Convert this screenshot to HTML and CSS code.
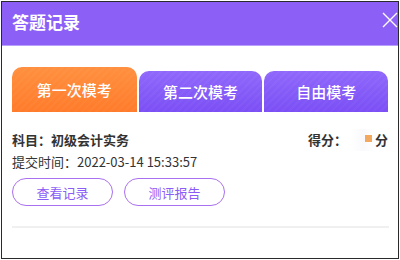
FILE: index.html
```html
<!DOCTYPE html>
<html lang="zh-CN">
<head>
<meta charset="utf-8">
<title>答题记录</title>
<link rel="stylesheet" href="styles.css">
</head>
<body>
<div class="dialog">
  <div class="header">
    <div class="title">答题记录</div>
    <svg class="close" width="16" height="16" viewBox="0 0 16 16"><path d="M1 1L15 15M15 1L1 15" stroke="#fff" stroke-width="1.4" fill="none"/></svg>
  </div>
  <div class="tabs">
    <div class="tab active">第一次模考</div>
    <div class="tab">第二次模考</div>
    <div class="tab">自由模考</div>
  </div>
  <div class="record">
    <div class="row">
      <span class="bold">科目：初级会计实务</span>
      <span class="score"><span class="bold">得分：</span><span class="blur"><span class="dot"></span></span><span class="bold">分</span></span>
    </div>
    <div class="row">提交时间：2022-03-14 15:33:57</div>
    <div class="actions">
      <button class="btn">查看记录</button>
      <button class="btn">测评报告</button>
    </div>
  </div>
  <div class="divider"></div>
</div>
</body>
</html>
```
FILE: styles.css
```css
* { box-sizing: border-box; }
html, body { margin: 0; padding: 0; background: #fff; }
body { padding: 1px; font-family: "Noto Sans CJK SC", "Noto Sans", sans-serif; color: #333; }
.dialog {
  width: 398px;
  height: 258px;
  border: 1px solid #2a2a2a;
  background: #fff;
}
.header {
  height: 44px;
  background: #8c5ff7;
  border-bottom: 1px solid #b9a0fb;
  display: flex;
  justify-content: space-between;
  align-items: flex-start;
  padding: 8px 0 0 10px;
}
.title {
  color: #fff;
  font-size: 17px;
  font-weight: 700;
  line-height: 24px;
}
.close { margin-top: 2px; margin-right: 0; }
.tabs {
  display: flex;
  align-items: flex-end;
  gap: 2px;
  padding: 0 10px;
  margin-top: 21px;
}
.tab {
  width: 124px;
  height: 41px;
  border-radius: 10px 10px 0 0;
  color: #fff;
  font-size: 15px;
  font-weight: 500;
  display: flex;
  align-items: center;
  justify-content: center;
  background:
    repeating-linear-gradient(135deg, rgba(255,255,255,0.03) 0 2px, rgba(255,255,255,0) 2px 5px),
    linear-gradient(#9068fb, #7b4ff5);
}
.tab.active {
  width: 125px;
  height: 45px;
  background:
    repeating-linear-gradient(135deg, rgba(255,255,255,0.03) 0 2px, rgba(255,255,255,0) 2px 5px),
    linear-gradient(#ff903f, #ff7b2b);
}
.record { padding: 17px 10px 0 10px; }
.row {
  display: flex;
  justify-content: space-between;
  font-size: 13px;
  line-height: 22px;
  color: #333;
}
.bold { font-weight: 700; }
.score { display: flex; align-items: center; }
.blur {
  width: 24px;
  height: 22px;
  display: flex;
  align-items: center;
  justify-content: flex-end;
  padding-right: 3px;
  margin-left: 4px;
  background: linear-gradient(90deg, rgba(250,250,253,0) 0, rgba(248,248,252,0.8) 50%, rgba(255,255,255,0) 100%);
}
.dot { width: 7px; height: 7px; background: #f2a85e; margin-top: -3px; }
.actions { display: flex; gap: 11px; margin-top: 5px; }
.btn {
  width: 101px;
  height: 28px;
  border: 1px solid #a970ef;
  border-radius: 14px;
  background: #fff;
  color: #8b5cf6;
  font-family: "Noto Sans CJK SC", "Noto Sans", sans-serif;
  font-size: 13px;
  padding: 0;
}
.divider {
  margin: 20px 9px 0 10px;
  height: 2px;
  background: #f0f0f0;
}
```
